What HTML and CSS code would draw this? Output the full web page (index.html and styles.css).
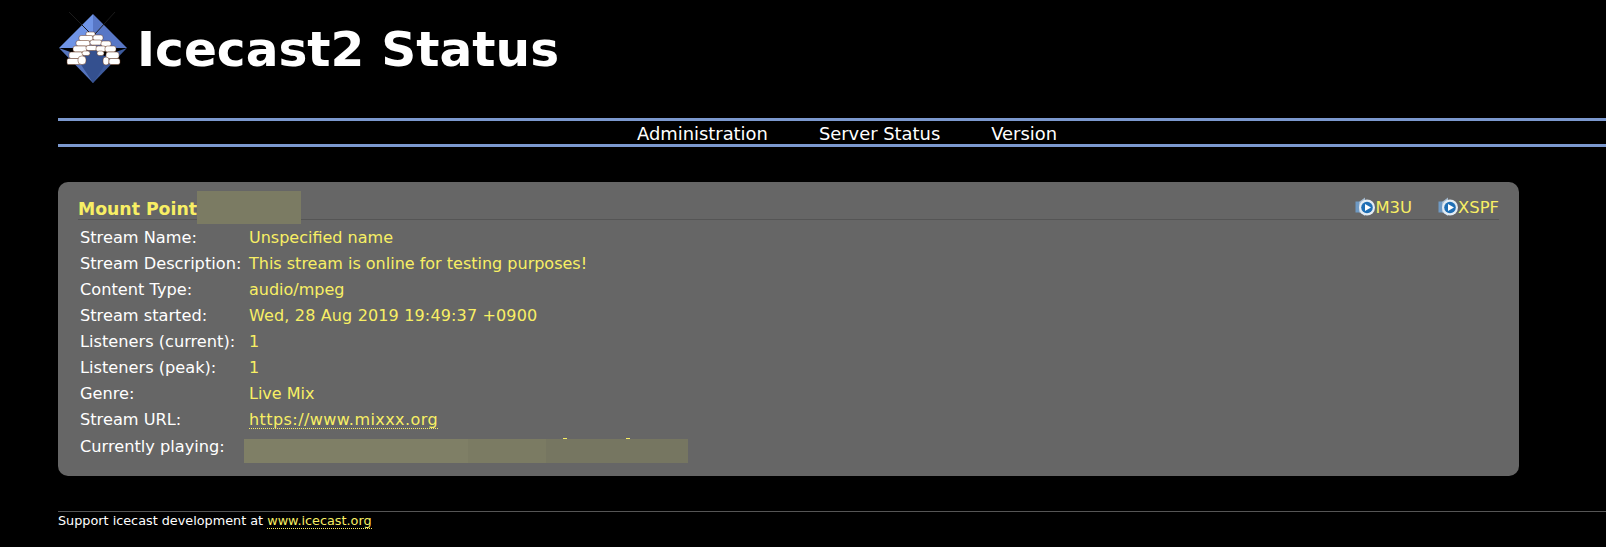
FILE: index.html
```html
<!DOCTYPE html>
<html lang="en">
<head>
    <meta charset="UTF-8">
    <title>Icecast Streaming Media Server</title>
    <link rel="stylesheet" href="styles.css">
</head>
<body>

    <div class="header">
        <svg class="logo" viewBox="0 0 76 76">
            <polygon points="39,4 5,38 39,38" fill="#6f94e6"/>
            <polygon points="39,4 73,38 39,38" fill="#5877c6"/>
            <polygon points="5,38 39,73 39,50" fill="#5574bd"/>
            <polygon points="73,38 39,73 39,50" fill="#3d5a9c"/>
            <polygon points="24,50 39,34 54,50 39,73" fill="#34508f"/>
            <path d="M15 2 L37 24 M61 2 L41 24" stroke="#1b1b1b" stroke-width="1"/>
            <g class="stones">
                <rect x="32" y="22" width="9" height="4" rx="1.5"/>
                <rect x="25" y="25.5" width="14" height="5.5" rx="2.2"/>
                <rect x="39" y="25" width="10" height="5.5" rx="2.2"/>
                <rect x="22" y="30.5" width="14" height="5.5" rx="2.2"/>
                <rect x="36" y="30" width="12" height="5" rx="2.2"/>
                <rect x="47" y="31" width="10" height="5.5" rx="2.2"/>
                <rect x="19" y="36" width="14" height="6" rx="2.2"/>
                <rect x="32" y="35.5" width="11" height="5" rx="2.2"/>
                <rect x="42" y="36" width="10" height="5.5" rx="2.2"/>
                <rect x="51" y="36" width="11" height="6" rx="2.2"/>
                <rect x="15" y="42" width="14" height="6.5" rx="2.2"/>
                <rect x="28" y="41" width="8" height="4.5" rx="2.2"/>
                <rect x="43" y="41" width="7" height="4.5" rx="2.2"/>
                <rect x="52" y="42" width="13" height="6.5" rx="2.2"/>
                <rect x="13" y="48.5" width="14" height="6" rx="1.5"/>
                <rect x="24" y="46" width="8" height="8.5" rx="3.5"/>
                <rect x="49" y="47" width="6" height="8" rx="3"/>
                <rect x="55" y="48.5" width="11" height="6" rx="2"/>
            </g>
        </svg>
        <h1>Icecast2 Status</h1>
    </div>

    <div class="menu">
        <ul>
            <li><a href="#">Administration</a></li>
            <li><a href="#">Server Status</a></li>
            <li><a href="#">Version</a></li>
        </ul>
    </div>

    <div class="roundbox">
        <div class="mounthead">
            <h3>Mount Point<span class="blur blur-mount"></span></h3>
            <div class="playlists">
                <a href="#"><svg class="play" viewBox="0 0 20 20"><use href="#tunein"/></svg>M3U</a>
                <a href="#"><svg class="play" viewBox="0 0 20 20"><use href="#tunein"/></svg>XSPF</a>
            </div>
        </div>
        <table class="info">
            <tr><td class="key">Stream Name:</td><td>Unspecified name</td></tr>
            <tr><td class="key">Stream Description:</td><td>This stream is online for testing purposes!</td></tr>
            <tr><td class="key">Content Type:</td><td>audio/mpeg</td></tr>
            <tr><td class="key">Stream started:</td><td class="date">Wed, 28 Aug 2019 19:49:37 +0900</td></tr>
            <tr><td class="key">Listeners (current):</td><td>1</td></tr>
            <tr><td class="key">Listeners (peak):</td><td>1</td></tr>
            <tr><td class="key">Genre:</td><td>Live Mix</td></tr>
            <tr><td class="key">Stream URL:</td><td><a class="url" href="#">https://www.mixxx.org</a></td></tr>
            <tr class="playing">
                <td class="key">Currently playing:</td>
                <td><span class="blur blur-playing"><i class="bit bit-a"></i><i class="bit bit-b"></i></span></td>
            </tr>
        </table>
    </div>

    <div class="footer">
        Support icecast development at <a href="#">www.icecast.org</a>
    </div>

    <svg class="defs" width="0" height="0">
        <symbol id="tunein" viewBox="0 0 20 20">
            <rect x="0.5" y="4.5" width="5" height="11" fill="#6f9ac4"/>
            <polygon points="4,5 10,0.5 10,19 4,15" fill="#a3bad0"/>
            <circle cx="12" cy="10.5" r="8" fill="#e4ecf3"/>
            <circle cx="12" cy="10.5" r="5.8" fill="#1f6fb5"/>
            <polygon points="10,7 10,14 16,10.5" fill="#fff"/>
        </symbol>
    </svg>

</body>
</html>
```

FILE: styles.css
```css
/* Base */
body {
    margin: 0;
    padding-left: 58px;
    background: #000;
    color: #fff;
    font-family: "DejaVu Sans", Verdana, sans-serif;
    font-size: 16px;
}

a {
    display: inline-block;
    color: #f8ef64;
    text-decoration: none;
    background: linear-gradient(90deg, #f8ef64 50%, transparent 50%) left bottom / 2px 1px repeat-x;
}

/* Header */
.header {
    display: flex;
    align-items: center;
    height: 96px;
}

.logo {
    width: 76px;
    height: 76px;
    margin-left: -4px;
}

.stones rect {
    fill: #fff;
    stroke: #6b3a20;
    stroke-width: 0.5;
}

h1 {
    margin: 1px 0 0 7px;
    font-size: 48.6px;
    font-weight: bold;
}

/* Menu */
.menu {
    margin-top: 22px;
    border-top: 3px solid #7b98ce;
    border-bottom: 3px solid #7b98ce;
}

.menu ul {
    display: flex;
    justify-content: center;
    gap: 51px;
    margin: 0;
    padding: 1px 0 0 30px;
    list-style: none;
    height: 22px;
    line-height: 23px;
    font-size: 17.9px;
}

.menu a {
    color: #fff;
    background: none;
}

/* Mount box */
.roundbox {
    width: 1461px;
    height: 294px;
    margin-top: 35px;
    padding: 0 20px;
    box-sizing: border-box;
    background: #666;
    border-radius: 10px;
}

.mounthead {
    display: flex;
    justify-content: space-between;
    height: 37px;
    border-bottom: 1px solid #555;
}

h3 {
    display: flex;
    margin: 0;
    padding-top: 9px;
    color: #f8ef64;
    font-size: 17.3px;
    line-height: 36px;
}

.blur {
    display: block;
    background: #7b7b63;
}

.blur-mount {
    width: 104px;
    height: 33px;
}

.playlists {
    display: flex;
    gap: 26px;
    padding-top: 15px;
    font-size: 16.4px;
}

.playlists a {
    display: flex;
    align-items: center;
    height: 20px;
    background: none;
}

.play {
    width: 20px;
    height: 20px;
}

.info {
    border-collapse: collapse;
    margin-top: 4px;
    margin-left: 2px;
}

.info td {
    height: 26px;
    padding: 0;
    color: #f8ef64;
    font-size: 16px;
    white-space: nowrap;
}

.info td.key {
    width: 169px;
    color: #fff;
    font-size: 16.2px;
}

.info td.date {
    letter-spacing: 0.15px;
}

.url {
    height: 19px;
    line-height: 19px;
    letter-spacing: 0.43px;
}

.playing td,
.info .playing td.key {
    height: 31px;
    vertical-align: top;
}

.info .playing td.key {
    padding-top: 2px;
    line-height: 26px;
}

.blur-playing {
    position: relative;
    width: 444px;
    height: 24px;
    margin: 7px 0 0 -5px;
    background: linear-gradient(90deg, #7f7f66 0 224px, #7b7b63 224px 302px, #767661 302px);
}

.bit {
    position: absolute;
    top: -1px;
    width: 4px;
    height: 1px;
    background: #f8ef64;
}

.bit-a {
    left: 319px;
}

.bit-b {
    left: 382px;
}

.defs {
    position: absolute;
}

/* Footer */
.footer {
    margin-top: 35px;
    padding-top: 1px;
    border-top: 1px solid #555;
    font-size: 12.8px;
    line-height: 16px;
}
```
